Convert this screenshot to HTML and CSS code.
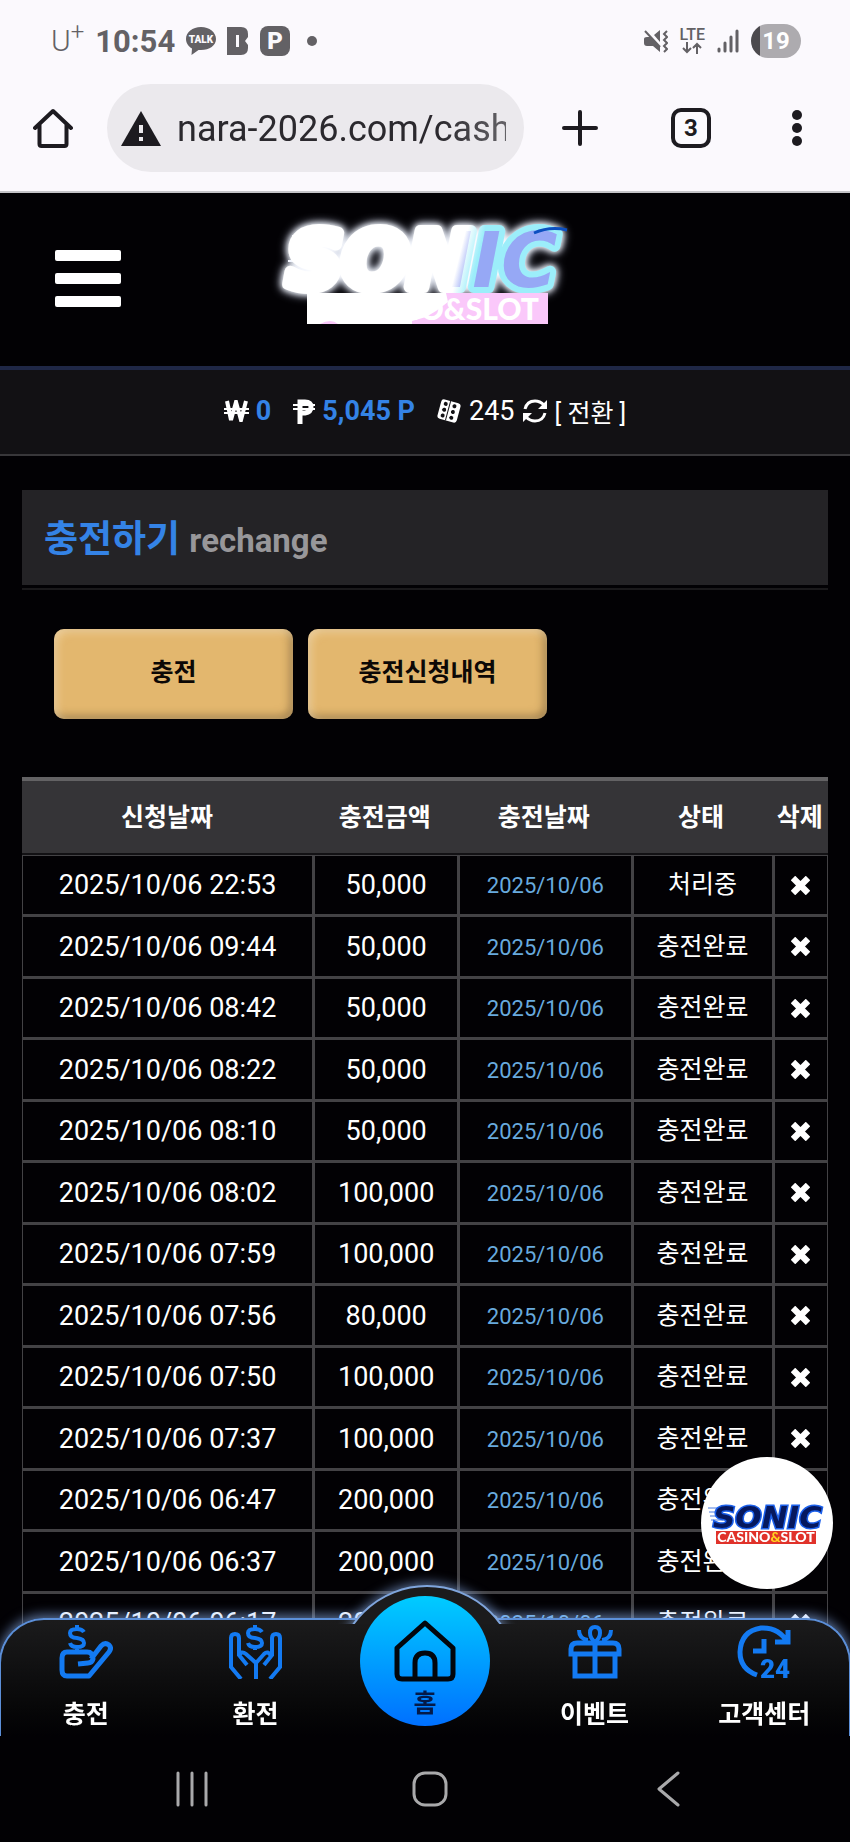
FILE: index.html
```html
<!DOCTYPE html>
<html lang="ko">

<head>
    <meta charset="UTF-8">
    <meta name="viewport" content="width=device-width, initial-scale=1.0">
    <title>충전하기</title>
    <link rel="stylesheet" href="styles.css">
</head>

<body>
    <!-- shared icons -->
    <svg class="defs" width="0" height="0" aria-hidden="true">
        <symbol id="x" viewBox="0 0 18 18">
            <path d="M4 4 L14 14 M14 4 L4 14" stroke="#fff" stroke-width="6" stroke-linecap="square" />
        </symbol>
    </svg>

    <div class="browser">
        <div class="statusbar">
            <div class="status-left">
                <span class="carrier">U<sup>+</sup></span>
                <span class="clock">10:54</span>
                <svg class="talk" width="30" height="28" viewBox="0 0 30 28">
                    <path d="M15 0C6.500 0 0 5 0 12c0 4 2.500 7.500 6 9.500L5.500 28l7-5h2.500c8.500 0 15-4.500 15-11S23.500 0 15 0z" fill="#636165" />
                    <text x="15" y="16" text-anchor="middle">TALK</text>
                </svg>
                <svg class="band" width="22" height="28" viewBox="0 0 22 28">
                    <path d="M0 0h14q7 0 7 7v3l-3 4 3 4v3q0 7-7 7H0z" fill="#636165" />
                    <path d="M10.500 8v12" stroke="#fbf9fd" stroke-width="3" />
                </svg>
                <span class="parking">P</span>
                <span class="dot"></span>
            </div>
            <div class="status-right">
                <svg width="25" height="25" viewBox="0 0 25 25" fill="none" stroke="#636165" stroke-width="2">
                    <path d="M2 2l15 16" />
                    <path d="M11 6l6-5v12zM1 10q0-2 3-2h3l10 10v5l-7-6H4q-3 0-3-3z" fill="#636165" stroke="none" />
                    <path d="M24 2l-3 3 3 3-3 3 3 3-3 3 3 3-3 3" />
                </svg>
                <div class="lte">
                    <span>LTE</span>
                    <svg width="20" height="12" viewBox="0 0 20 12" fill="none" stroke="#636165" stroke-width="2">
                        <path d="M5 0v10M1 6l4 4 4-4M15 12V2M11 6l4-4 4 4" />
                    </svg>
                </div>
                <svg width="22" height="24" viewBox="0 0 22 24" stroke="#636165" stroke-width="3" stroke-linecap="round">
                    <path d="M2 20v2M8 14v8M14 8v14M20 2v20" />
                </svg>
                <span class="battery">19</span>
            </div>
        </div>

        <div class="toolbar">
            <button class="tool" aria-label="Home">
                <svg width="40" height="40" viewBox="0 0 40 40" fill="none" stroke="#1d1b20" stroke-width="4" stroke-linejoin="round" stroke-linecap="round">
                    <path d="M2 20L20 3l18 17M6.500 17v19q0 2 2 2h23q2 0 2-2V17" />
                </svg>
            </button>
            <label class="address">
                <svg width="40" height="35" viewBox="0 0 40 35">
                    <path d="M20 0L40 35H0z" fill="#1d1b20" />
                    <path d="M20 14v8M20 26v4" stroke="#ebe9ed" stroke-width="4" />
                </svg>
                <input type="text" value="nara-2026.com/cash" aria-label="URL">
            </label>
            <button class="tool new-tab" aria-label="New tab">
                <svg width="36" height="36" viewBox="0 0 36 36" stroke="#1d1b20" stroke-width="4" stroke-linecap="round">
                    <path d="M18 2v32M2 18h32" />
                </svg>
            </button>
            <button class="tool tabs">3</button>
            <button class="tool more" aria-label="Menu">
                <svg width="10" height="36" viewBox="0 0 10 36" fill="#1d1b20">
                    <circle cx="5" cy="5" r="5" />
                    <circle cx="5" cy="18" r="5" />
                    <circle cx="5" cy="31" r="5" />
                </svg>
            </button>
        </div>
    </div>

    <header class="header">
        <button class="hamburger" aria-label="메뉴"><i></i><i></i><i></i></button>
        <svg class="logo" width="320" height="130" viewBox="-5 4 320 130">
            <defs>
                <!-- light sweep passing over the name -->
                <linearGradient id="sweep-fill" gradientUnits="userSpaceOnUse" x1="196" y1="20" x2="208" y2="23">
                    <stop offset="0" stop-color="#fff" />
                    <stop offset="1" stop-color="#96a8f5" />
                </linearGradient>
                <linearGradient id="sweep-edge" gradientUnits="userSpaceOnUse" x1="198" y1="20" x2="214" y2="24">
                    <stop offset="0" stop-color="#fff" />
                    <stop offset="1" stop-color="#9ceefa" />
                </linearGradient>
            </defs>
            <path d="M22 27h20M18 52h20M14 66h20" stroke="#fff" stroke-width="2" />
            <text class="logo-name" x="17" y="78">SONIC</text>
            <path d="M264 24q16-7 33-3" stroke="#0c4fc0" stroke-width="3" fill="none" />
            <rect x="37" y="84" width="241" height="31" fill="#fac8fa" />
            <path d="M37 84h139l2 9-12 9-10 6-14 4v3H68q-7-6-18 0H37z" fill="#fff" />
            <text class="logo-sub" x="269" y="111">CASINO&amp;SLOT</text>
        </svg>
    </header>

    <div class="wallet">
        <svg width="25" height="22" viewBox="0 0 25 22" fill="none" stroke="#fff">
            <path d="M3 1l4 19 5-18 5 18 5-19" stroke-width="4" />
            <path d="M0 9h25M0 13h25" stroke-width="2" />
        </svg>
        <b>0</b>
        <svg class="point" width="22" height="25" viewBox="0 0 22 25" fill="none" stroke="#fff">
            <path d="M7 25V3h5q6 0 6 5t-6 6H7" stroke-width="5" />
            <path d="M0 6h22M0 10h22" stroke-width="2" />
        </svg>
        <b>5,045 P</b>
        <svg class="dice" width="25" height="25" viewBox="0 0 25 25">
            <g transform="rotate(15 12 12)">
                <rect x="2" y="2" width="20" height="20" rx="3" fill="#fff" />
                <path d="M11 2v20" stroke="#121114" stroke-width="1" />
                <g fill="#121114">
                    <circle cx="7" cy="6" r="2" />
                    <circle cx="7" cy="12" r="2" />
                    <circle cx="7" cy="18" r="2" />
                    <circle cx="16" cy="6" r="2" />
                    <circle cx="16" cy="12" r="2" />
                    <circle cx="16" cy="18" r="2" />
                </g>
            </g>
        </svg>
        <span>245</span>
        <a href="#" class="convert">
            <svg width="26" height="24" viewBox="0 0 26 24">
                <path d="M3 10q2-8 10-8 5 0 9 4M23 14q-2 8-10 8-5 0-9-4" fill="none" stroke="#fff" stroke-width="3" />
                <path d="M25 1v9h-9zM1 23v-9h9z" fill="#fff" />
            </svg>
            <span>[ 전환 ]</span>
        </a>
    </div>

    <main class="content">
        <div class="title">
            <h1>충전하기 <small>rechange</small></h1>
        </div>

        <div class="tabs-row">
            <button class="gold">충전</button>
            <button class="gold">충전신청내역</button>
        </div>

        <table class="history">
            <colgroup>
                <col class="c-date">
                <col class="c-amount">
                <col class="c-done">
                <col class="c-state">
                <col class="c-del">
            </colgroup>
            <thead>
                <tr>
                    <th>신청날짜</th>
                    <th>충전금액</th>
                    <th>충전날짜</th>
                    <th>상태</th>
                    <th>삭제</th>
                </tr>
            </thead>
            <tbody>
                <tr>
                    <td>2025/10/06 22:53</td>
                    <td>50,000</td>
                    <td class="done">2025/10/06</td>
                    <td class="state">처리중</td>
                    <td><button class="del" aria-label="삭제"><svg><use href="#x" /></svg></button></td>
                </tr>
                <tr>
                    <td>2025/10/06 09:44</td>
                    <td>50,000</td>
                    <td class="done">2025/10/06</td>
                    <td class="state">충전완료</td>
                    <td><button class="del" aria-label="삭제"><svg><use href="#x" /></svg></button></td>
                </tr>
                <tr>
                    <td>2025/10/06 08:42</td>
                    <td>50,000</td>
                    <td class="done">2025/10/06</td>
                    <td class="state">충전완료</td>
                    <td><button class="del" aria-label="삭제"><svg><use href="#x" /></svg></button></td>
                </tr>
                <tr>
                    <td>2025/10/06 08:22</td>
                    <td>50,000</td>
                    <td class="done">2025/10/06</td>
                    <td class="state">충전완료</td>
                    <td><button class="del" aria-label="삭제"><svg><use href="#x" /></svg></button></td>
                </tr>
                <tr>
                    <td>2025/10/06 08:10</td>
                    <td>50,000</td>
                    <td class="done">2025/10/06</td>
                    <td class="state">충전완료</td>
                    <td><button class="del" aria-label="삭제"><svg><use href="#x" /></svg></button></td>
                </tr>
                <tr>
                    <td>2025/10/06 08:02</td>
                    <td>100,000</td>
                    <td class="done">2025/10/06</td>
                    <td class="state">충전완료</td>
                    <td><button class="del" aria-label="삭제"><svg><use href="#x" /></svg></button></td>
                </tr>
                <tr>
                    <td>2025/10/06 07:59</td>
                    <td>100,000</td>
                    <td class="done">2025/10/06</td>
                    <td class="state">충전완료</td>
                    <td><button class="del" aria-label="삭제"><svg><use href="#x" /></svg></button></td>
                </tr>
                <tr>
                    <td>2025/10/06 07:56</td>
                    <td>80,000</td>
                    <td class="done">2025/10/06</td>
                    <td class="state">충전완료</td>
                    <td><button class="del" aria-label="삭제"><svg><use href="#x" /></svg></button></td>
                </tr>
                <tr>
                    <td>2025/10/06 07:50</td>
                    <td>100,000</td>
                    <td class="done">2025/10/06</td>
                    <td class="state">충전완료</td>
                    <td><button class="del" aria-label="삭제"><svg><use href="#x" /></svg></button></td>
                </tr>
                <tr>
                    <td>2025/10/06 07:37</td>
                    <td>100,000</td>
                    <td class="done">2025/10/06</td>
                    <td class="state">충전완료</td>
                    <td><button class="del" aria-label="삭제"><svg><use href="#x" /></svg></button></td>
                </tr>
                <tr>
                    <td>2025/10/06 06:47</td>
                    <td>200,000</td>
                    <td class="done">2025/10/06</td>
                    <td class="state">충전완료</td>
                    <td><button class="del" aria-label="삭제"><svg><use href="#x" /></svg></button></td>
                </tr>
                <tr>
                    <td>2025/10/06 06:37</td>
                    <td>200,000</td>
                    <td class="done">2025/10/06</td>
                    <td class="state">충전완료</td>
                    <td><button class="del" aria-label="삭제"><svg><use href="#x" /></svg></button></td>
                </tr>
                <tr>
                    <td>2025/10/06 06:17</td>
                    <td>200,000</td>
                    <td class="done">2025/10/06</td>
                    <td class="state">충전완료</td>
                    <td><button class="del" aria-label="삭제"><svg><use href="#x" /></svg></button></td>
                </tr>
            </tbody>
        </table>
    </main>

    <a href="#" class="floating" aria-label="SONIC CASINO&amp;SLOT">
        <svg width="132" height="132" viewBox="0 0 132 132">
            <path d="M7 51h16M8 55h14M9 59h14M10 63h12" stroke="#4c7ce0" stroke-width="1" />
            <text class="float-name" x="12" y="71">SONIC</text>
            <rect x="15" y="74" width="100" height="13" fill="#e0322a" />
            <text class="float-sub" x="65" y="85">CASINO<tspan fill="#ffd21e">&amp;</tspan>SLOT</text>
        </svg>
    </a>

    <div class="bottom">
        <nav class="menu">
            <a href="#">
                <svg width="54" height="54" viewBox="0 0 54 54" fill="none" stroke="#137af2" stroke-width="5">
                    <path d="M25 7q-2-3-7-3-7 0-7 4 0 5 7 5 7 1 7 5t-7 4q-6 0-7-4M18 0v4M18 22v5" stroke-width="4" />
                    <path d="M19 39l10-1q4 0 5-4 0-7-6-7H8q-5 0-5 6v12q0 6 5 6h22l20-24q3-4 0-7-4-3-8 1L32 34" stroke-linejoin="round" />
                </svg>
                <span>충전</span>
            </a>
            <a href="#">
                <svg width="54" height="54" viewBox="0 0 54 54" fill="none" stroke="#137af2" stroke-width="4">
                    <path d="M34 7q-2-3-7-3-7 0-7 4 0 5 7 5 7 1 7 5t-7 4q-6 0-7-4M27 0v4M27 22v3" />
                    <path d="M13 54L3 42V13q0-4 4-4t4 4v17l8 10M11 31q2-6 7-2l10 9v16M42 54l10-12V13q0-4-4-4t-4 4v17l-8 10M43 31q-3-6-7-2l-8 9" />
                </svg>
                <span>환전</span>
            </a>
            <a href="#" class="home">
                <span class="disc">
                    <svg width="62" height="62" viewBox="0 0 62 62" fill="none" stroke="#02060c" stroke-width="5" stroke-linejoin="round">
                        <path d="M31 3L3 28v26q0 5 5 5h46q5 0 5-5V28zM21 59V43q0-10 10-10t10 10v16" />
                    </svg>
                    <span>홈</span>
                </span>
            </a>
            <a href="#">
                <svg width="54" height="54" viewBox="0 0 54 54" fill="none" stroke="#137af2" stroke-width="5">
                    <path d="M3 29v-5q0-6 6-6h36q6 0 6 6v5zM7 29v22h40V29M27 17v35" />
                    <path d="M27 17q-5-4-5-9 0-6 5-6t5 6q0 5-5 9M11 5q0 9 9 10M43 5q0 9-9 10" stroke-width="4" />
                </svg>
                <span>이벤트</span>
            </a>
            <a href="#">
                <svg width="54" height="54" viewBox="0 0 54 54" fill="none" stroke="#137af2" stroke-width="5">
                    <path d="M20 50Q3 44 3 27 4 6 24 3q18-1 27 15M51 5v12H38M27 14v12H16" />
                    <text x="23" y="53">24</text>
                </svg>
                <span>고객센터</span>
            </a>
        </nav>
        <div class="android">
            <button aria-label="Recents">
                <svg width="34" height="36" viewBox="0 0 34 36" stroke="#a9a9ab" stroke-width="3" stroke-linecap="round">
                    <path d="M3 2v32M17 2v32M31 2v32" />
                </svg>
            </button>
            <button aria-label="Home">
                <svg width="36" height="36" viewBox="0 0 36 36" fill="none" stroke="#a9a9ab" stroke-width="3">
                    <rect x="2" y="2" width="32" height="32" rx="11" />
                </svg>
            </button>
            <button aria-label="Back">
                <svg width="24" height="36" viewBox="0 0 24 36" fill="none" stroke="#a9a9ab" stroke-width="3" stroke-linecap="round" stroke-linejoin="round">
                    <path d="M22 2L3 18l19 16" />
                </svg>
            </button>
        </div>
    </div>
</body>

</html>
```
FILE: styles.css
```css
* {
    box-sizing: border-box;
}

body {
    margin: 0;
    min-height: 100vh;
    background-color: #020104;
    color: #fff;
    font-family: Roboto, "Noto Sans CJK KR", sans-serif;
    font-size: 25px;
}

svg {
    display: block;
    flex-shrink: 0;
}

a {
    color: inherit;
    text-decoration: none;
}

button {
    padding: 0;
    border: 0;
    background: none;
    color: inherit;
    font-family: inherit;
}

.defs {
    position: absolute;
}

/* browser */
.browser {
    height: 193px;
    background-color: #fbf9fd;
    border-bottom: 2px solid #c4c4c8;
}

.statusbar {
    display: flex;
    justify-content: space-between;
    height: 84px;
    padding: 0 49px 2px 51px;
    color: #636165;
}

.status-left,
.status-right {
    display: flex;
    align-items: center;
}

.status-left {
    gap: 11px;
}

.status-right {
    gap: 12px;
}

.carrier {
    font-size: 30px;
    font-weight: 300;
    line-height: 30px;
}

.carrier sup {
    font-size: 24px;
    line-height: 0;
}

.clock {
    font-size: 31px;
    font-weight: 700;
}

.talk text {
    fill: #fbf9fd;
    font-size: 10px;
    font-weight: 900;
}

.parking {
    width: 30px;
    border-radius: 8px;
    background-color: #636165;
    color: #fbf9fd;
    font-size: 24px;
    font-weight: 900;
    line-height: 30px;
    text-align: center;
}

.dot {
    width: 10px;
    height: 10px;
    margin-left: 6px;
    border-radius: 50%;
    background-color: #636165;
}

.lte {
    display: flex;
    flex-direction: column;
    align-items: center;
    font-size: 16px;
    font-weight: 500;
    line-height: 14px;
}

.battery {
    width: 50px;
    border-radius: 17px;
    background: linear-gradient(90deg, #4c4a4e 9px, #adabaf 9px);
    color: #fff;
    font-size: 24px;
    font-weight: 700;
    line-height: 34px;
    text-align: center;
}

.toolbar {
    display: flex;
    align-items: center;
    padding: 0 48px 0 33px;
    color: #1d1b20;
}

.address {
    display: flex;
    flex: 1;
    align-items: center;
    gap: 16px;
    min-width: 0;
    height: 88px;
    margin: 0 38px 0 34px;
    padding: 0 18px 0 14px;
    border-radius: 44px;
    background-color: #ebe9ed;
}

.address input {
    flex: 1;
    min-width: 0;
    padding: 2px 0 0;
    border: 0;
    background: none;
    color: #2b292e;
    font-family: Roboto, sans-serif;
    font-size: 36px;
    mask-image: linear-gradient(90deg, #000 80%, rgba(0, 0, 0, 0.7));
}

.tabs {
    width: 40px;
    height: 40px;
    margin: 0 81px 0 73px;
    border: 4px solid #1d1b20;
    border-radius: 10px;
    font-size: 24px;
    font-weight: 700;
}

/* site header */
.header {
    display: grid;
    grid-template-columns: 1fr auto 1fr;
    align-items: center;
    height: 177px;
    padding: 0 55px 3px;
    border-bottom: 4px solid #1f2746;
}

.hamburger {
    display: flex;
    flex-direction: column;
    gap: 12px;
    width: 66px;
}

.hamburger i {
    width: 100%;
    height: 11px;
    border-radius: 2px;
    background-color: #fff;
}

.logo-name {
    fill: url(#sweep-fill);
    stroke: url(#sweep-edge);
    stroke-width: 12px;
    stroke-linejoin: round;
    paint-order: stroke;
    filter: drop-shadow(0 0 3px #fff) drop-shadow(0 0 4px #dfe8ff);
    font-family: "DejaVu Sans", sans-serif;
    font-size: 77px;
    font-style: italic;
    font-weight: 700;
}

.logo-sub {
    fill: #fff;
    font-family: Lato, sans-serif;
    font-size: 30px;
    font-weight: 900;
    text-anchor: end;
}

.wallet {
    display: flex;
    align-items: center;
    justify-content: center;
    gap: 7px;
    height: 86px;
    padding-bottom: 2px;
    border-bottom: 2px solid #38373a;
    background-color: #121114;
    font-size: 27px;
}

.wallet b {
    color: #3483e6;
}

.point,
.dice {
    margin-left: 15px;
}

.convert {
    display: flex;
    align-items: center;
    gap: 7px;
    font-size: 25px;
}

/* content */
.content {
    padding: 34px 22px 187px;
}

.title {
    border-bottom: 2px solid #1a191b;
    padding-bottom: 3px;
}

.title h1 {
    height: 95px;
    margin: 0;
    padding: 2px 22px 0;
    background-color: #242326;
    color: #3483e6;
    font-size: 37px;
    line-height: 95px;
}

.title small {
    color: #98979a;
    font-size: 33px;
}

.tabs-row {
    display: flex;
    gap: 15px;
    padding: 39px 32px 58px;
}

.gold {
    width: 239px;
    height: 90px;
    padding-bottom: 8px;
    border-radius: 10px;
    background-color: #e3b76e;
    box-shadow: inset 3px 3px 8px rgba(255, 240, 210, 0.5), inset -3px -3px 8px rgba(90, 70, 40, 0.5);
    color: #0c0806;
    font-size: 25px;
    font-weight: 700;
}

.history {
    width: 100%;
    table-layout: fixed;
    border-collapse: separate;
    border-spacing: 0;
    text-align: center;
}

.c-date {
    width: 36%;
}

.c-amount {
    width: 18%;
}

.c-done {
    width: 21.5%;
}

.c-state {
    width: 17.5%;
}

.c-del {
    width: 7%;
}

.history th {
    height: 78px;
    padding: 0 0 4px;
    border-top: 4px solid #636264;
    border-bottom: 2px solid #121114;
    background-color: #353437;
    font-size: 25px;
    white-space: nowrap;
}

.history td {
    height: 61px;
    padding: 0;
    border-bottom: 3px solid #434245;
    border-left: 3px solid #434245;
    font-size: 27px;
    line-height: 30px;
}

.history tr:nth-child(even) td {
    height: 62px;
}

.history tbody tr:first-child td {
    height: 62px;
    border-top: 1px solid #434245;
}

.history td:first-child {
    border-left-width: 1px;
}

.history td:last-child {
    border-right: 1px solid #434245;
}

.history .done {
    padding-top: 2px;
    color: #68aade;
    font-size: 22px;
}

.history .state {
    font-size: 25px;
}

.del {
    display: block;
    margin: 0 auto;
}

.del svg {
    width: 19px;
    height: 19px;
}

/* floating badge */
.floating {
    position: fixed;
    right: 17px;
    bottom: 253px;
    border-radius: 50%;
    background-color: #fff;
}

.float-name {
    fill: #06185e;
    stroke: #1c60ea;
    stroke-width: 3px;
    paint-order: stroke;
    font-family: "DejaVu Sans", sans-serif;
    font-size: 31px;
    font-style: italic;
    font-weight: 700;
}

.float-sub {
    fill: #fff;
    font-family: Lato, sans-serif;
    font-size: 14px;
    font-weight: 900;
    text-anchor: middle;
}

/* bottom menu */
.bottom {
    position: fixed;
    right: 0;
    bottom: 0;
    left: 0;
}

.menu {
    position: relative;
    display: grid;
    grid-template-columns: repeat(5, 1fr);
    height: 118px;
    margin: 0 -1px;
    border: 2px solid #5c8fd8;
    border-bottom: 0;
    border-radius: 45px 45px 0 0;
    background: linear-gradient(#1b1b1c, #060607 80%, #020104);
    box-shadow: 0 -3px 12px rgba(150, 190, 255, 0.6);
}

/* bump behind the home disc, only its cap is shown */
.menu::before {
    content: "";
    position: absolute;
    top: -35px;
    left: 50%;
    width: 178px;
    height: 178px;
    margin-left: -89px;
    border: 2px solid #7fa5dc;
    border-radius: 50%;
    background-color: #1b1b1c;
    box-shadow: 0 -2px 12px rgba(150, 190, 255, 0.6);
    clip-path: inset(-20px 0 143px);
}

.menu a {
    display: flex;
    flex-direction: column;
    align-items: center;
    gap: 18px;
    padding-top: 5px;
    font-size: 25px;
    font-weight: 700;
    line-height: 36px;
}

.menu text {
    fill: #137af2;
    stroke: none;
    font-size: 26px;
    font-weight: 900;
}

.menu .home {
    position: relative;
    padding: 0;
}

.disc {
    position: absolute;
    top: -24px;
    display: flex;
    flex-direction: column;
    align-items: center;
    gap: 4px;
    width: 130px;
    height: 130px;
    padding-top: 24px;
    border-radius: 50%;
    background: linear-gradient(#00ccff, #0070ff);
    color: #041a48;
}

.android {
    position: relative;
    display: flex;
    justify-content: space-between;
    height: 106px;
    padding: 0 160px 0 170px;
    background-color: #020104;
}

.android button {
    display: flex;
    align-items: center;
    justify-content: center;
    width: 44px;
}
```
